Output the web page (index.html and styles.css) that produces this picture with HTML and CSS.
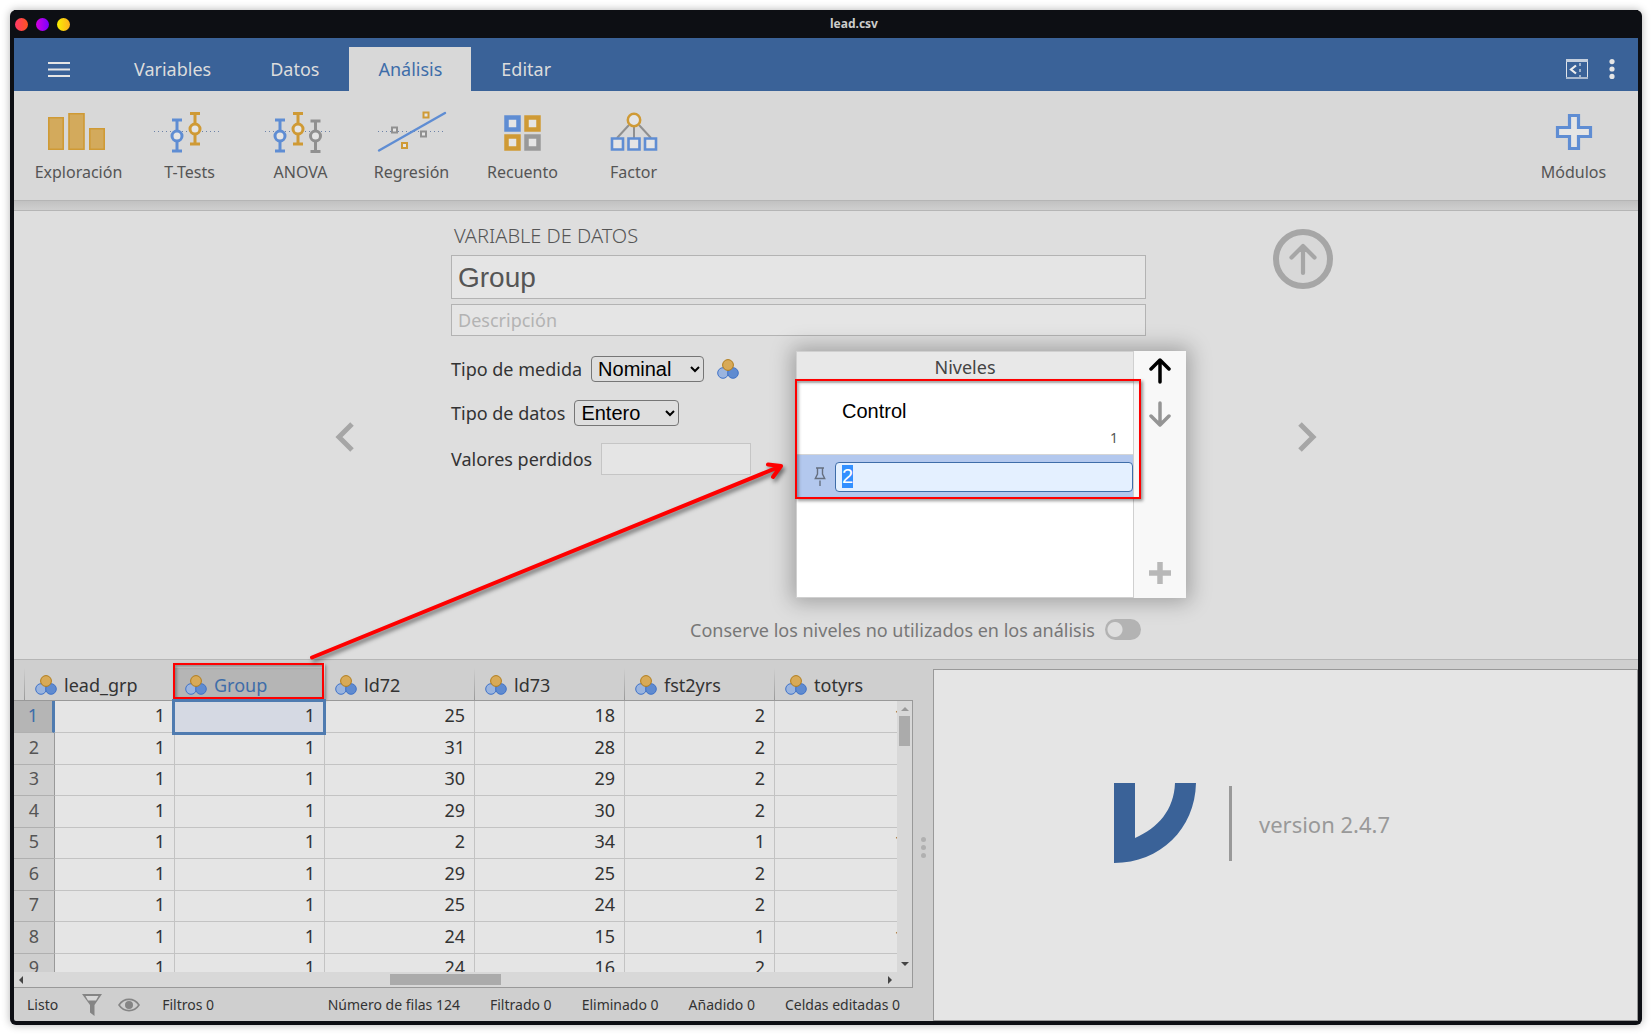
FILE: index.html
```html
<!DOCTYPE html>
<html lang="es">
<head>
<meta charset="utf-8">
<title>lead.csv</title>
<link rel="stylesheet" href="styles.css">
</head>
<body>
<svg class="defs" width="0" height="0" aria-hidden="true">
  <symbol id="nominal" viewBox="0 0 22 20">
    <circle cx="6" cy="14" r="5.3" fill="#9ab4de" stroke="#3f72c8"/>
    <circle cx="16" cy="14" r="5.3" fill="#5f8bd0" stroke="#3f72c8"/>
    <circle cx="11" cy="6" r="5.4" fill="#d8aa57" stroke="#b27d1c"/>
  </symbol>
</svg>
<div class="window">
  <header class="titlebar">
    <div class="lights"><span class="light red"></span><span class="light purple"></span><span class="light yellow"></span></div>
    <h1 class="title">lead.csv</h1>
  </header>

  <nav class="tabs">
    <button class="icon-btn menu" aria-label="Menú"><svg width="22" height="16" viewBox="0 0 22 16"><path d="M0 2h22M0 8.500h22M0 15h22" stroke="#e5e5e5" stroke-width="2.2"/></svg></button>
    <button class="tab">Variables</button>
    <button class="tab">Datos</button>
    <button class="tab active">Análisis</button>
    <button class="tab">Editar</button>
    <button class="icon-btn panel" aria-label="Panel"><svg width="22" height="20" viewBox="0 0 22 20" fill="none"><path d="M.5 1v18.5h21V1" stroke="#dfe4ea"/><path d="M0 1.5h22" stroke="#c4cfdd" stroke-width="3"/><path d="M0 19h22" stroke="#a9b9cf" stroke-width="2"/><path d="M14 4v14" stroke="#b9c7d9" stroke-width="1.6" stroke-dasharray="3 3"/><path d="M10 6.500 5 10.500l5 4" stroke="#eee" stroke-width="2.200"/></svg></button>
    <button class="icon-btn more" aria-label="Opciones"><svg width="6" height="20" viewBox="0 0 6 20" fill="#e5e5e5"><circle cx="3" cy="2.600" r="2.600"/><circle cx="3" cy="10" r="2.600"/><circle cx="3" cy="17.400" r="2.600"/></svg></button>
  </nav>

  <div class="ribbon">
    <button class="tool"><svg width="72" height="44" viewBox="0 0 72 44" fill="#d3aa5c" stroke="#cf9a35" stroke-width="1.600"><path d="M5.800 7.800h14.400v31.400H5.800zM26 3.800h15v35.400H26zM46.800 18.800h14.400v20.400H46.800z"/></svg>Exploración</button>
    <button class="tool"><svg width="72" height="44" viewBox="2 0 72 44" fill="none"><path d="M2 21.500h68" stroke="#6d83a8" stroke-dasharray="1 3"/><g stroke="#5f8dd3" stroke-width="3"><path d="M20 10h10M20 41h10M25 10v31"/><circle cx="25" cy="26" r="5" fill="#e5e5e5"/></g><g stroke="#cf9a35" stroke-width="3"><path d="M38 3.500h10M38 34h10M43 3.500V34"/><circle cx="43" cy="19" r="5" fill="#e5e5e5"/></g></svg>T-Tests</button>
    <button class="tool"><svg width="72" height="44" viewBox="1 0 72 44" fill="none"><path d="M1 21.500h68" stroke="#6d83a8" stroke-dasharray="1 3"/><g stroke="#5f8dd3" stroke-width="3"><path d="M11 10h10M11 41h10M16 10v31"/><circle cx="16" cy="26" r="5" fill="#e5e5e5"/></g><g stroke="#cf9a35" stroke-width="3"><path d="M29 3.500h10M29 34h10M34 3.500V34"/><circle cx="34" cy="19" r="5" fill="#e5e5e5"/></g><g stroke="#909090" stroke-width="3"><path d="M46.500 11h10M46.500 41.500h10M51.500 11v30"/><circle cx="51.500" cy="26" r="5" fill="#e5e5e5"/></g></svg>ANOVA</button>
    <button class="tool"><svg width="72" height="44" viewBox="1 0 72 44" fill="#e5e5e5" stroke-width="2"><path d="M3 21.500h68" stroke="#6d83a8" stroke-width="1" stroke-dasharray="1 3"/><path d="M4 40.500 70 3" stroke="#5f8dd3" stroke-width="2.400" stroke-linecap="round"/><path d="M48.500 2.500h5v5h-5zM27 33h5v5h-5z" stroke="#cf9a35"/><path d="M17 17.500h5v5h-5zM46 21.500h5v5h-5z" stroke="#909090"/></svg>Regresión</button>
    <button class="tool"><svg width="72" height="44" viewBox="0 0 72 44" fill="#e5e5e5" stroke-width="4.500"><path d="M19.500 7.500h12v12h-12z" stroke="#5f8dd3"/><path d="M39.500 7.500h12v12h-12zM19.500 26.500h12v12h-12z" stroke="#cf9a35"/><path d="M39.500 26.500h12v12h-12z" stroke="#999"/></svg>Recuento</button>
    <button class="tool"><svg width="72" height="44" viewBox="0 0 72 44" fill="#e5e5e5"><path d="m31 15-12 13M36 16v12M41 15l12 13" stroke="#909090" stroke-width="2"/><circle cx="36" cy="10" r="6.200" stroke="#cf9a35" stroke-width="2.500"/><path d="M14 28.500h11v11H14zM30.500 28.500h11v11h-11zM47 28.500h11v11H47z" stroke="#5f8dd3" stroke-width="2.600"/></svg>Factor</button>
    <button class="tool modules"><svg width="72" height="44" viewBox="0 0 72 44"><path d="M31.500 5.500h9v12h12v9h-12v12h-9v-12h-12v-9h12z" fill="#e5e5e5" stroke="#5f8dd3" stroke-width="3.200"/></svg>Módulos</button>
  </div>

  <main class="editor">
    <div class="editor-inner">
      <div class="side">
        <button class="icon-btn nav" aria-label="Anterior"><svg width="20" height="32" viewBox="0 0 20 32" fill="none"><path d="M17 3 4 16l13 13" stroke="#a6a6a6" stroke-width="5"/></svg></button>
      </div>
      <div class="variable">
        <h2 class="heading">VARIABLE DE DATOS</h2>
        <div class="fields">
          <input class="name" type="text" value="Group" aria-label="Nombre">
          <input class="desc" type="text" placeholder="Descripción" aria-label="Descripción">
        </div>
        <div class="props">
          <div class="form">
            <div class="row"><label for="measure">Tipo de medida</label><select id="measure" class="measure"><option>Nominal</option></select><svg class="kind" width="22" height="20"><use href="#nominal"/></svg></div>
            <div class="row"><label for="dtype">Tipo de datos</label><select id="dtype" class="dtype"><option>Entero</option></select></div>
            <div class="row"><label for="missing">Valores perdidos</label><input id="missing" class="missing" type="text"></div>
          </div>
          <div class="levels">
            <div class="level-list">
              <div class="level-title">Niveles</div>
              <div class="level"><span class="level-label">Control</span><span class="level-value">1</span></div>
              <div class="level selected">
                <svg class="pin" width="12" height="20" viewBox="0 0 12 20" fill="none" stroke="#666f80" stroke-width="1.400"><path d="M2 1h8M3.500 1.500V7L1.300 11.500h9.400L8.500 7V1.500M6 13.500V19"/></svg>
                <input id="level" class="level-input" type="text" value="2" aria-label="Nivel 2">
              </div>
              <div class="highlight levels-highlight"></div>
            </div>
            <div class="level-tools">
              <button class="icon-btn" aria-label="Subir"><svg width="24" height="26" viewBox="0 0 24 26" fill="none" stroke="#000" stroke-width="3.500" stroke-linecap="round" stroke-linejoin="round"><path d="M12 24V2.500M3 11l9-9 9 9"/></svg></button>
              <button class="icon-btn" aria-label="Bajar"><svg width="24" height="26" viewBox="0 0 24 26" fill="none" stroke="#959595" stroke-width="3.500" stroke-linecap="round" stroke-linejoin="round"><path d="M12 2v21.500M3 15l9 9 9-9"/></svg></button>
              <button class="icon-btn add" aria-label="Añadir nivel"><svg width="24" height="24" viewBox="0 0 24 24"><path d="M12 1v22M1 12h22" stroke="#b8b8b8" stroke-width="5.500"/></svg></button>
            </div>
          </div>
        </div>
        <div class="keep"><label for="keep">Conserve los niveles no utilizados en los análisis</label><input id="keep" class="toggle" type="checkbox" role="switch"></div>
      </div>
      <div class="side">
        <button class="icon-btn close" aria-label="Cerrar"><svg width="60" height="60" viewBox="0 0 60 60" fill="none" stroke="#a6a6a6"><circle cx="30" cy="30" r="27" fill="#d8d8d8" stroke-width="6"/><path d="M30 44V17M18.500 28.500 30 17l11.500 11.500" stroke-width="4.200" stroke-linecap="round" stroke-linejoin="round"/></svg></button>
        <button class="icon-btn nav" aria-label="Siguiente"><svg width="20" height="32" viewBox="0 0 20 32" fill="none"><path d="m3 3 13 13L3 29" stroke="#a6a6a6" stroke-width="5"/></svg></button>
      </div>
    </div>
  </main>

  <div class="bottom">
    <section class="data">
      <div class="grid-frame">
        <table class="grid">
          <colgroup><col class="c-edge"><col class="c-num"><col class="c-first"><col class="c"><col class="c"><col class="c"><col class="c"><col class="c"></colgroup>
          <thead><tr>
            <td></td>
            <th colspan="2"><span class="var"><svg width="22" height="20"><use href="#nominal"/></svg>lead_grp</span></th>
            <th class="current"><span class="var"><svg width="22" height="20"><use href="#nominal"/></svg>Group</span><div class="highlight column-highlight"></div></th>
            <th><span class="var"><svg width="22" height="20"><use href="#nominal"/></svg>ld72</span></th>
            <th><span class="var"><svg width="22" height="20"><use href="#nominal"/></svg>ld73</span></th>
            <th><span class="var"><svg width="22" height="20"><use href="#nominal"/></svg>fst2yrs</span></th>
            <th><span class="var"><svg width="22" height="20"><use href="#nominal"/></svg>totyrs</span></th>
          </tr></thead>
          <tbody>
            <tr class="current-row"><th colspan="2">1</th><td>1</td><td class="cell-current">1</td><td>25</td><td>18</td><td>2</td><td>10</td></tr>
            <tr><th colspan="2">2</th><td>1</td><td>1</td><td>31</td><td>28</td><td>2</td><td></td></tr>
            <tr><th colspan="2">3</th><td>1</td><td>1</td><td>30</td><td>29</td><td>2</td><td></td></tr>
            <tr><th colspan="2">4</th><td>1</td><td>1</td><td>29</td><td>30</td><td>2</td><td></td></tr>
            <tr><th colspan="2">5</th><td>1</td><td>1</td><td>2</td><td>34</td><td>1</td><td>10</td></tr>
            <tr><th colspan="2">6</th><td>1</td><td>1</td><td>29</td><td>25</td><td>2</td><td></td></tr>
            <tr><th colspan="2">7</th><td>1</td><td>1</td><td>25</td><td>24</td><td>2</td><td></td></tr>
            <tr><th colspan="2">8</th><td>1</td><td>1</td><td>24</td><td>15</td><td>1</td><td>10</td></tr>
            <tr><th colspan="2">9</th><td>1</td><td>1</td><td>24</td><td>16</td><td>2</td><td></td></tr>
          </tbody>
        </table>
        <div class="scroll-y"><i class="tri up"></i><span class="thumb-y"></span><i class="tri down"></i></div>
        <div class="scroll-x"><i class="tri left"></i><span class="thumb-x"></span><i class="tri right"></i></div>
      </div>
      <footer class="status">
        <span>Listo</span>
        <button class="icon-btn" aria-label="Filtro"><svg width="20" height="22" viewBox="0 0 20 22"><path d="M0 0h20L12.500 11v11L8 18.500V11z" fill="#858585"/><path d="M3.500 2h13L14 6.500H6z" fill="#d8d8d8"/></svg></button>
        <button class="icon-btn" aria-label="Mostrar"><svg width="22" height="14" viewBox="0 0 22 14"><path d="M1 7c5-7.500 15-7.500 20 0-5 7.500-15 7.500-20 0z" fill="none" stroke="#858585" stroke-width="1.600"/><circle cx="11" cy="7" r="4" fill="#858585"/></svg></button>
        <span>Filtros 0</span>
        <span class="count">Número de filas 124</span><span>Filtrado 0</span><span>Eliminado 0</span><span>Añadido 0</span><span>Celdas editadas 0</span>
      </footer>
    </section>
    <div class="splitter"><i></i><i></i><i></i></div>
    <section class="results">
      <svg class="logo" width="82" height="80" viewBox="0 0 82 80"><path d="M0 0h21v55C44 45 60 27 61 0h21C81 46 46 80 0 80z" fill="#3a6298"/></svg>
      <span class="version">version 2.4.7</span>
    </section>
  </div>

  <svg class="callout" width="490" height="210" viewBox="0 0 490 210" aria-hidden="true"><path d="M9 201.500 477 10.500M465 8.500l13 1.500-8 11" fill="none" stroke="#fe0000" stroke-width="4" stroke-linecap="round" stroke-linejoin="round"/></svg>
</div>
<script src="app.js"></script>
</body>
</html>
```
FILE: styles.css
```css
* { box-sizing: border-box; }

body {
  margin: 0;
  padding: 10px;
  min-height: 100vh;
  display: flex;
  background: #fff;
  color: #333;
  font: 18px/24px "Noto Sans", sans-serif;
}

button, input, select { font: inherit; color: inherit; margin: 0; }
button { border: 0; padding: 0; background: none; }
svg { display: block; flex: none; }
.defs { position: absolute; }
.icon-btn { display: flex; align-items: center; justify-content: center; }

.window {
  position: relative;
  flex: 1;
  min-width: 0;
  display: flex;
  flex-direction: column;
  border: 4px solid #0d0f14;
  border-top: 0;
  border-radius: 6px;
  background: #cfcfcf;
  box-shadow: 0 0 8px rgba(0, 0, 0, .3);
}

/* Title bar */
.titlebar {
  display: grid;
  grid-template-columns: 1fr auto 1fr;
  align-items: center;
  height: 28px;
  background: #0d0f14;
}
.lights { display: flex; gap: 8px; padding-left: 1px; }
.light { width: 13px; height: 13px; border-radius: 50%; }
.red { background: linear-gradient(90deg, #ff3a68, #ff5420); }
.purple { background: linear-gradient(90deg, #d400e0, #7a00ff); }
.yellow { background: linear-gradient(90deg, #f8f000, #ffae20); }
.title { margin: 0; padding-left: 56px; color: #ccc; font-size: 12px; line-height: 20px; font-weight: 700; }

/* Tabs */
.tabs {
  display: flex;
  align-items: stretch;
  gap: 1px;
  height: 53px;
  padding: 9px 23px 0 34px;
  background: #3a6298;
}
.menu { width: 22px; margin-right: 34px; }
.tab { padding: 0 29px; color: #dcdcdc; }
.tab.active { background: #d8d8d8; color: #3e6da9; }
.panel { margin-left: auto; }
.more { width: 6px; margin-left: 20px; }

/* Ribbon */
.ribbon {
  display: flex;
  height: 109px;
  padding: 10px 9px 0 9px;
  background: #d8d8d8;
}
.tool {
  display: flex;
  flex-direction: column;
  align-items: center;
  gap: 6px;
  width: 111px;
  padding-top: 9px;
  color: #555;
  font-size: 16px;
}
.modules { margin-left: auto; }

/* Variable editor, with the shaded strip under the ribbon at its top */
.editor {
  padding-top: 11px;
  border-bottom: 1px solid #b5b5b5;
  background:
    linear-gradient(#b5b5b5, #b5b5b5) 0 10px / 100% 1px no-repeat,
    linear-gradient(#b5b5b5 1px, #c1c1c1 1px, #cfcfcf) 0 0 / 100% 10px no-repeat,
    #dedede;
}
.editor-inner { display: flex; max-width: 1030px; margin: 0 auto; }
.side {
  display: grid;
  grid-template-rows: 1fr auto 1fr;
  width: 68px;
  padding-top: 4px;
}
.side .nav { grid-row: 2; justify-self: center; }
.close { grid-row: 1; place-self: start; padding-top: 14px; }
.variable { flex: 1; min-width: 0; padding: 13px 87px 19px 72px; }
.heading {
  margin: 0 0 7px;
  padding-left: 3px;
  font-size: 20px;
  line-height: 24px;
  font-weight: 300;
  color: #555;
}
.fields { display: grid; gap: 5px; padding-right: 40px; }
.name, .desc, .missing {
  min-width: 0;
  border: 1px solid #b3b3b3;
  background: #e5e5e5;
  padding: 0 6px;
  outline: 0;
}
.name { height: 44px; padding-top: 2px; font: 28px "Liberation Sans", sans-serif; color: #555; }
.desc { height: 32px; }
.desc::placeholder { color: #b3b3b3; }
.props { display: flex; justify-content: space-between; height: 247px; margin-top: 15px; }
.form { display: flex; flex-direction: column; gap: 17px; padding-top: 4px; }
.row { display: flex; align-items: center; gap: 9px; min-height: 27px; }
.row select {
  height: 26px;
  padding: 0 2px;
  border: 1px solid #767676;
  border-radius: 4px;
  background-color: #dedede;
  color: #000;
  font: 20px "Liberation Sans", sans-serif;
}
.measure { width: 113px; }
.dtype { width: 105px; }
.kind { margin-left: 4px; }
.missing { width: 150px; height: 32px; border-color: #c5c5c5; }

.levels { display: flex; box-shadow: 0 0 20px 4px rgba(0, 0, 0, .28); }
.level-list {
  position: relative;
  width: 338px;
  border: 1px solid #d0d0d0;
  background: #fff;
}
.level-title { height: 31px; line-height: 31px; text-align: center; background: #e8e8e8; color: #444; }
.level {
  display: flex;
  flex-direction: column;
  justify-content: space-between;
  height: 72px;
  padding: 16px 15px 4px 45px;
  border-bottom: 1px solid #d5d5d5;
  color: #000;
}
.level-label { font: 20px/24px "Liberation Sans", sans-serif; }
.level-value { align-self: flex-end; font-size: 14px; color: #555; }
.level.selected {
  flex-direction: row;
  align-items: center;
  gap: 9px;
  height: 43px;
  padding: 0 0 0 17px;
  border: 0;
  background: #b3c8ee;
}
.level-input {
  flex: 1;
  min-width: 0;
  height: 30px;
  padding: 0 6px;
  border: 1px solid #3e6da9;
  border-radius: 4px;
  outline: 0;
  background: #e4f0ff;
  font: 20px "Liberation Sans", sans-serif;
}
.level-input::selection { background: #3390ff; color: #fff; }
.level-tools {
  display: flex;
  flex-direction: column;
  align-items: center;
  gap: 17px;
  width: 52px;
  padding: 7px 0 13px;
  background: #f8f8f8;
}
.add { margin-top: auto; }

.highlight {
  position: absolute;
  border: 2px solid #fe0000;
  box-shadow: 2px 2px 3px rgba(0, 0, 0, .4), inset 2px 2px 3px rgba(0, 0, 0, .3);
}
.levels-highlight { top: 27px; left: -2px; right: -8px; height: 120px; }
.column-highlight { top: 3px; left: -1px; right: 0; bottom: 1px; }

.keep {
  display: flex;
  align-items: center;
  justify-content: flex-end;
  gap: 10px;
  height: 21px;
  margin-top: 21px;
  padding-right: 45px;
  color: #777;
}
.toggle {
  appearance: none;
  width: 36px;
  height: 21px;
  border-radius: 11px;
  background: radial-gradient(circle at 10px 50%, #dedede 7px, transparent 8px) #b3b3b3;
}

/* Data and results */
.bottom {
  flex: 1;
  display: grid;
  grid-template-columns: minmax(0, 899fr) 20px minmax(0, 705fr);
  min-height: 361px;
}
.data { display: flex; flex-direction: column; }
.grid-frame {
  flex: 1 0 0;
  position: relative;
  overflow: hidden;
  border-bottom: 1px solid #999;
}
.grid { width: 910px; table-layout: fixed; border-collapse: separate; border-spacing: 0; }
.c-edge { width: 10px; }
.c-num { width: 30px; }
.c-first { width: 120px; }
.c { width: 150px; }
.grid th, .grid td { padding: 0; font-weight: 400; line-height: 24px; }
.grid thead th, .grid thead td { height: 41px; border-bottom: 1px solid #999; }
.grid thead th {
  position: relative;
  background: linear-gradient(#cfcfcf 8px, #999) left / 1px 100% no-repeat;
}
.grid thead .current {
  background: linear-gradient(#b5b5b5, #b5b5b5) bottom / 100% 32px no-repeat;
  color: #3e6da9;
}
.var { display: flex; align-items: center; gap: 7px; padding: 9px 0 0 11px; }
.grid tbody th, .grid tbody td { height: 31px; border-bottom: 1px solid #c3c3c3; }
.grid tbody tr:nth-child(even) > *, .grid tbody tr:first-child > * { height: 32px; }
.grid tbody td {
  padding: 0 9px 4px 0;
  border-left: 1px solid #c3c3c3;
  text-align: right;
  background: #e5e5e5;
}
.grid tbody th + td { border-left-color: #999; }
.grid tbody th {
  padding-bottom: 4px;
  border-bottom-color: #b0b0b0;
  color: #555;
}
.grid tbody .current-row th { background: #b5b5b5; color: #3e6da9; border-right: 2px solid #4f7bb0; }
.grid tbody .current-row th + td { border-left-color: #4f7bb0; }
.grid tbody .cell-current { background: #d5d9e3; outline: 3px solid #4f7bb0; outline-offset: -1px; position: relative; }

.scroll-y, .scroll-x { position: absolute; display: flex; align-items: center; background: #d8d8d8; }
.scroll-y { top: 41px; right: 0; bottom: 0; width: 16px; flex-direction: column; border-right: 1px solid #999; padding: 6px 0 21px; }
.scroll-x { left: 0; right: 16px; bottom: 0; height: 15px; padding: 0 5px; }
.thumb-y { width: 11px; height: 30px; margin-top: 5px; background: #ababab; }
.thumb-x { width: 111px; height: 11px; margin-left: 367px; background: #ababab; }
.tri { width: 0; height: 0; border: 4px solid transparent; }
.up { border-top: 0; border-bottom-color: #999; }
.down { border-bottom: 0; border-top-color: #444; margin-top: auto; }
.left { border-left: 0; border-right-color: #444; }
.right { border-right: 0; border-left-color: #444; margin-left: auto; }

.status {
  display: flex;
  align-items: center;
  gap: 30px;
  height: 33px;
  padding: 0 13px;
  font-size: 14px;
  white-space: nowrap;
}
.status .icon-btn { margin: 0 -8px 0 -6px; }
.count { margin-left: auto; }

.splitter { display: flex; flex-direction: column; align-items: center; justify-content: center; gap: 3px; padding-top: 14px; }
.splitter i { width: 5px; height: 5px; border-radius: 50%; background: #b0b0b0; }

.results {
  display: flex;
  justify-content: center;
  padding: 113px 67px 0 0;
  margin-top: 9px;
  border: 1px solid #999;
  background: #e5e5e5;
  color: #999;
}
.version {
  height: 75px;
  margin: 3px 0 0 33px;
  padding-left: 27px;
  border-left: 3px solid #999;
  font-size: 22px;
  line-height: 77px;
}

/* Arrow from the selected column to its levels */
.callout { position: absolute; left: 289px; top: 446px; filter: drop-shadow(2px 3px 2px rgba(0, 0, 0, .5)); pointer-events: none; }
```
FILE: app.js
```js
const level = document.getElementById('level');
level.focus();
level.select();
```
